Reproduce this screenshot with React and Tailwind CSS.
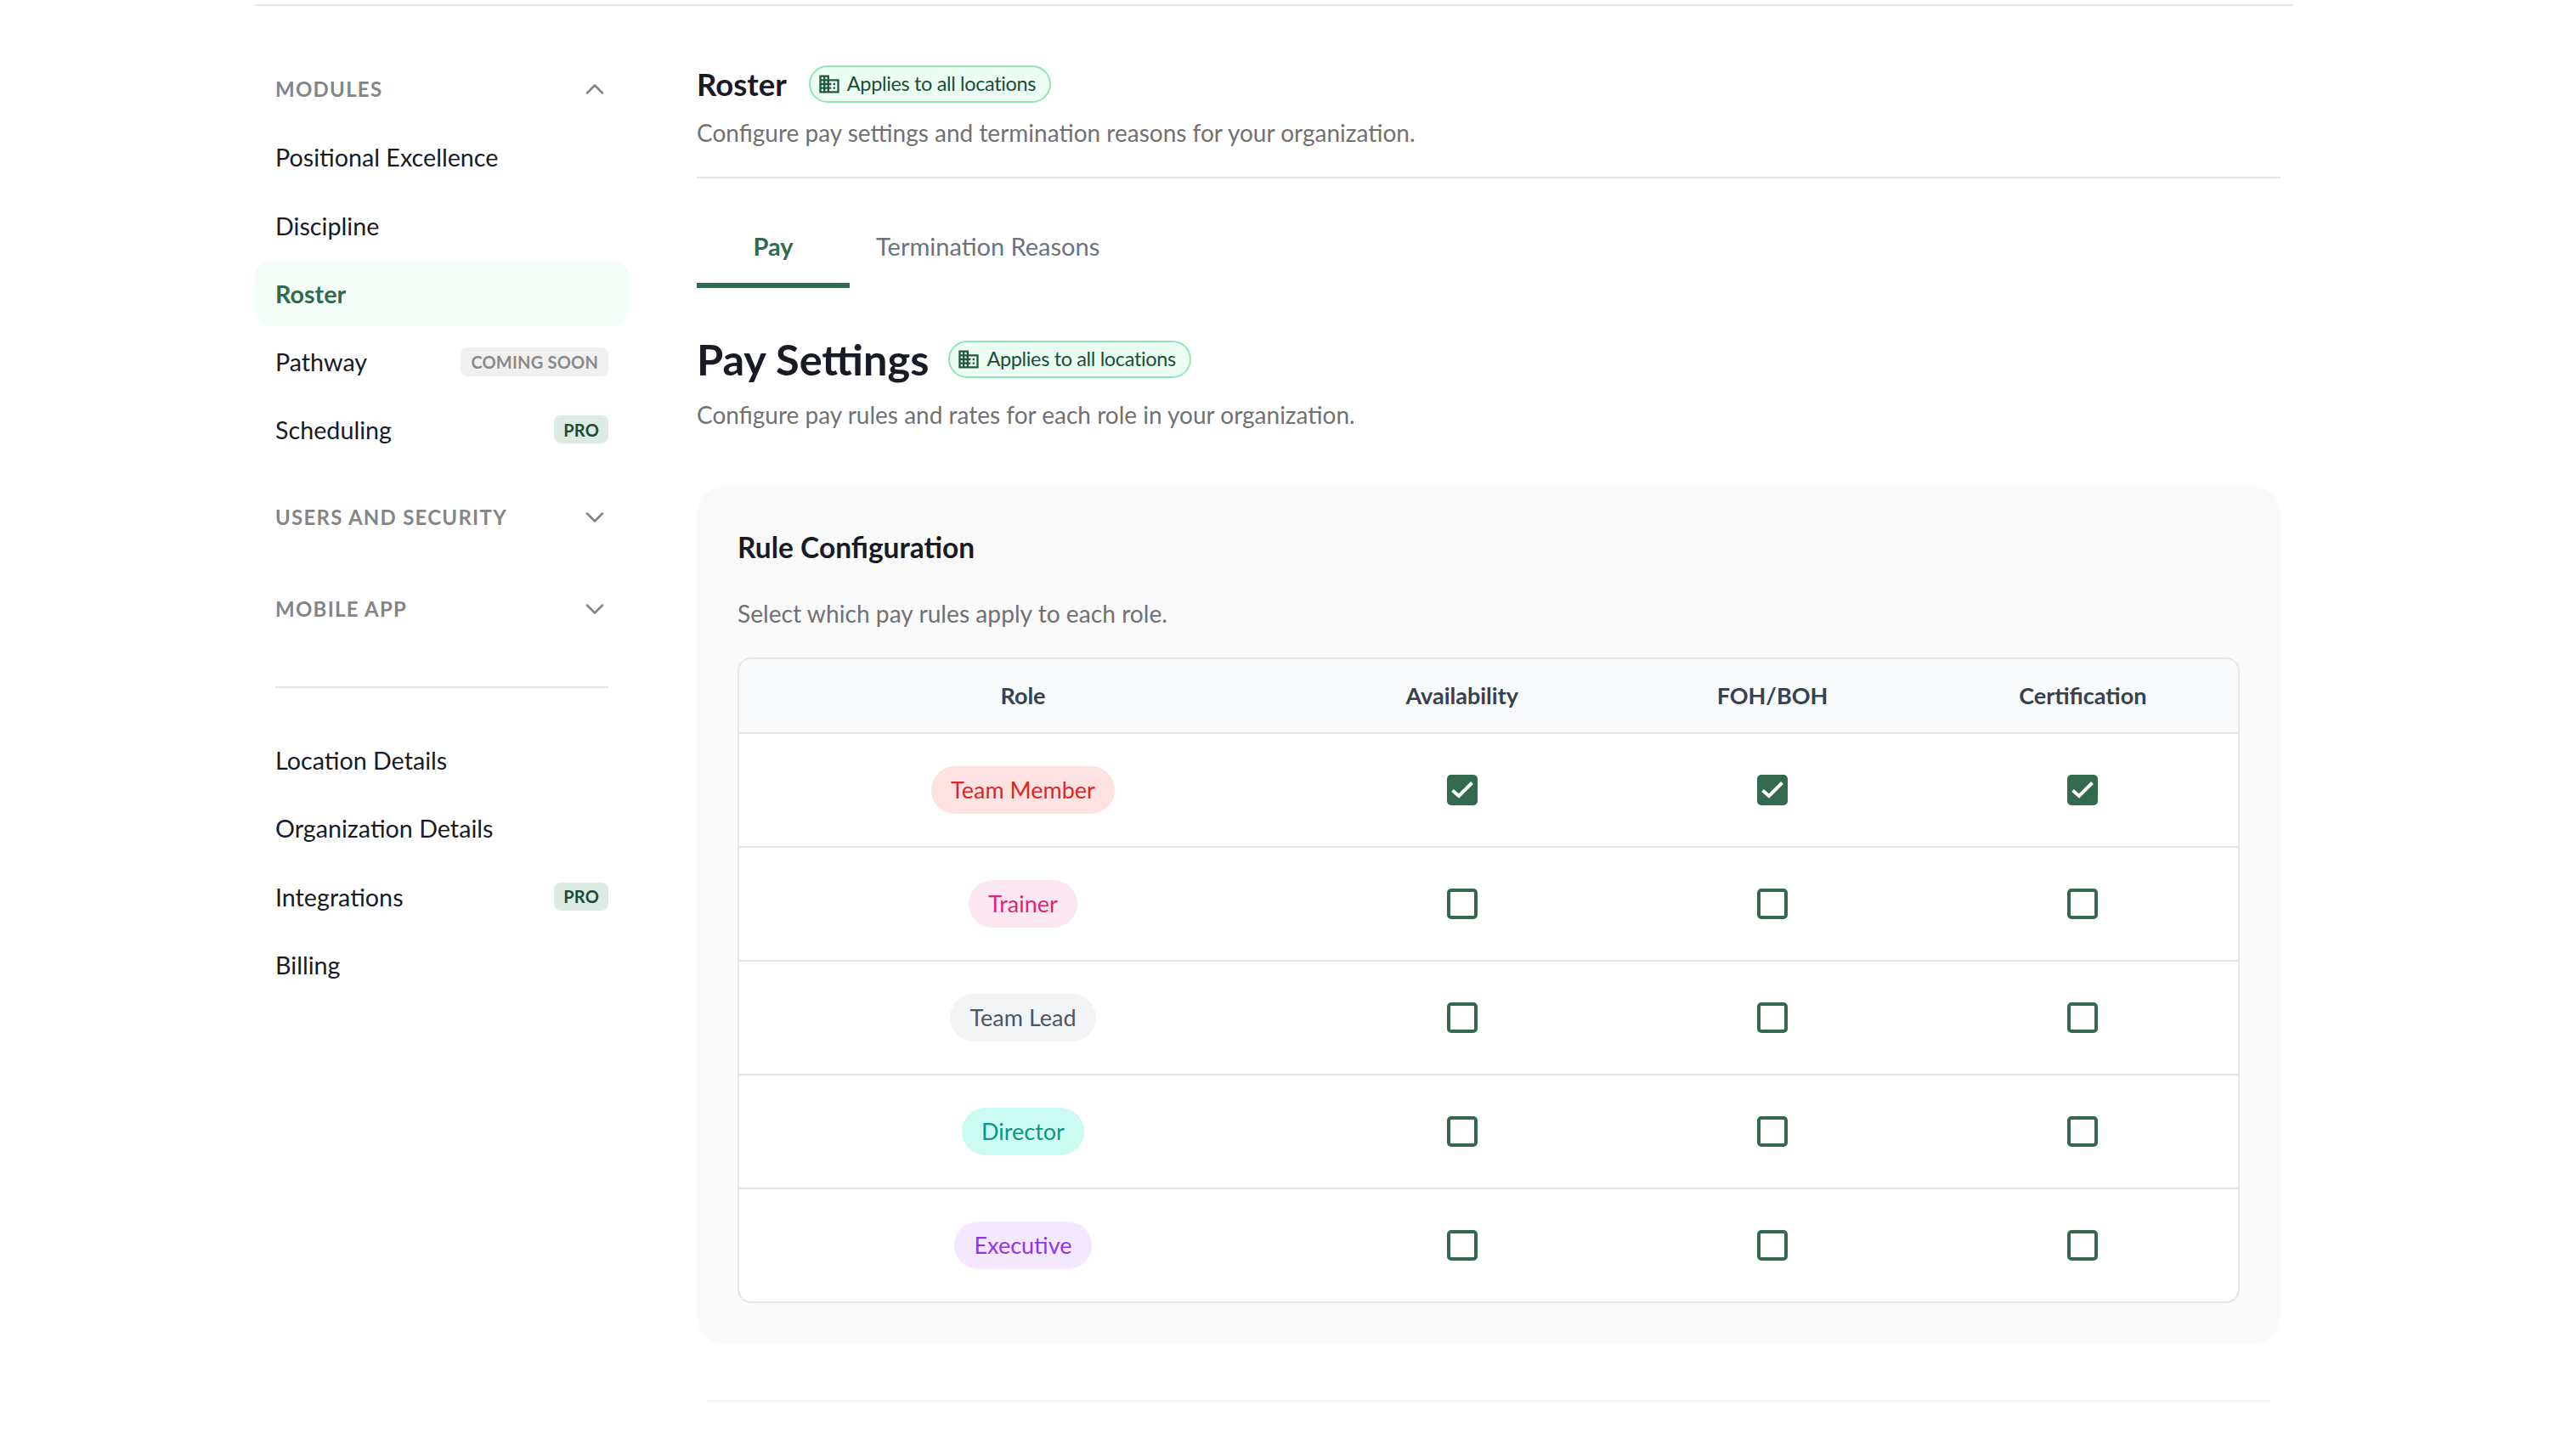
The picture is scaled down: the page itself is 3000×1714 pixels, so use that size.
import React from "react";
import { ChevronUp, ChevronDown } from "lucide-react";
import { MdBusiness } from "react-icons/md";

const Item = ({ label, active, badge }) => (
  <div className={`flex h-[76px] items-center justify-between rounded-[16px] pl-[24px] pr-[24px] text-[28.7px] ${active ? "bg-[#f5fdf9] font-bold text-[#2f6b4f]" : "text-[#181a26]"}`}>
    <span>{label}</span>
    {badge === "soon" && <span className="mb-[2px] flex h-[34px] items-center rounded-[8px] bg-[#f0f0f0] px-[12px] text-[20px] font-bold tracking-[0.2px] text-[#8a8a8a]">COMING SOON</span>}
    {badge === "pro" && <span className="mb-[2px] flex h-[33px] items-center rounded-[8px] bg-[#dcebe4] px-[11px] text-[20px] font-bold tracking-[0.2px] text-[#1f4a36]">PRO</span>}
  </div>
);

const SectionHead = ({ label, open, className = "" }) => (
  <div className={`flex h-[40px] items-center justify-between pl-[24px] pr-[22px] ${className}`}>
    <span className="text-[24px] font-bold tracking-[1.25px] text-[#858585]">{label}</span>
    {open ? <ChevronUp size={36} strokeWidth={1.7} className="text-[#858585]" /> : <ChevronDown size={36} strokeWidth={1.7} className="text-[#858585]" />}
  </div>
);

const ScopePill = () => (
  <span className="flex h-[44px] items-center gap-[7px] rounded-full border-2 border-[#8fe6b4] bg-[#ecfdf3] pl-[8px] pr-[16px] text-[23.5px] tracking-[-0.35px] text-[#1b4d36]">
    <MdBusiness size={28} className="text-[#1f5a3e]" />
    Applies to all locations
  </span>
);

const Check = ({ on }) =>
  on ? (
    <span className="flex h-[36px] w-[36px] items-center justify-center rounded-[5px] bg-[#33694f]">
      <svg width="36" height="36" viewBox="0 0 36 36" fill="none" stroke="#ffffff" strokeWidth="4">
        <path d="M6.5 18.5 14 25 29.5 9.5" />
      </svg>
    </span>
  ) : (
    <span className="block h-[36px] w-[36px] rounded-[5px] border-[4px] border-[#33694f] bg-white" />
  );

const roles = [
  { name: "Team Member", pill: "bg-[#fee2e2] text-[#dc2626]", on: true },
  { name: "Trainer", pill: "bg-[#fce7f3] text-[#db2777]" },
  { name: "Team Lead", pill: "bg-[#f3f4f6] text-[#4b5563]" },
  { name: "Director", pill: "bg-[#ccfbf1] text-[#0d9488]" },
  { name: "Executive", pill: "bg-[#f3e8ff] text-[#9333ea]" },
];

export default function App() {
  return (
    <div className="min-h-[1714px] w-[3000px] overflow-hidden bg-white pt-[5px] font-['Lato',sans-serif]">
      <div className="ml-[300px] w-[2399px] border-t-2 border-[#e5e5e5]">
        <div className="flex">
          <aside className="w-[440px] shrink-0 pt-[78px]">
            <SectionHead label="MODULES" open />
            <nav className="mt-[23px] flex flex-col gap-[4.2px]">
              <Item label="Positional Excellence" />
              <Item label="Discipline" />
              <Item label="Roster" active />
              <Item label="Pathway" badge="soon" />
              <Item label="Scheduling" badge="pro" />
            </nav>
            <SectionHead label="USERS AND SECURITY" className="mt-[44px]" />
            <SectionHead label="MOBILE APP" className="mt-[68px]" />
            <div className="ml-[24px] mr-[24px] mt-[71px] border-t-2 border-[#e5e5e5]" />
            <nav className="mt-[48px] flex flex-col gap-[4.2px]">
              <Item label="Location Details" />
              <Item label="Organization Details" />
              <Item label="Integrations" badge="pro" />
              <Item label="Billing" />
            </nav>
          </aside>

          <main className="ml-[80px] w-[1864px] pt-[70px]">
            <div className="flex h-[44px] items-center gap-[26px]">
              <h1 className="text-[36.5px] font-bold text-[#181a26]">Roster</h1>
              <ScopePill />
            </div>
            <p className="mt-[13px] text-[28px] leading-[44px] text-[#717171]">Configure pay settings and termination reasons for your organization.</p>
            <div className="mt-[30px] border-t-2 border-[#e5e5e5]" />

            <div className="mt-[29px] flex items-start">
              <div className="flex h-[100px] w-[180px] items-start justify-center border-b-[6px] border-[#2f6b4f] pt-[29px] text-[29px] font-bold leading-[44px] text-[#2f6b4f]">Pay</div>
              <div className="ml-[31px] pt-[29px] text-[29px] leading-[44px] text-[#6b7280]">Termination Reasons</div>
            </div>

            <div className="mt-[62px] flex h-[44px] items-center gap-[23px]">
              <h2 className="text-[50.5px] font-bold leading-[64px] text-[#181a26]">Pay Settings</h2>
              <ScopePill />
            </div>
            <p className="mt-[21px] text-[28px] leading-[44px] text-[#717171]">Configure pay rules and rates for each role in your organization.</p>

            <section className="mt-[62px] rounded-[32px] bg-[#fafafa] px-[48px] pb-[48px] pt-[48px]">
              <h3 className="text-[33.5px] font-bold leading-[48px] text-[#181a26]">Rule Configuration</h3>
              <p className="mt-[32px] text-[28.2px] leading-[44px] text-[#717171]">Select which pay rules apply to each role.</p>
              <div className="mt-[30px] overflow-hidden rounded-[16px] border-2 border-[#e5e5e5] bg-white">
                <div className="grid h-[86px] grid-cols-[668px_1fr_1fr_1fr] items-center bg-[#f9fafb] text-center text-[27px] font-bold text-[#374151]">
                  <div>Role</div>
                  <div>Availability</div>
                  <div>FOH/BOH</div>
                  <div>Certification</div>
                </div>
                {roles.map((r) => (
                  <div key={r.name} className="grid h-[134px] grid-cols-[668px_1fr_1fr_1fr] items-center border-t-2 border-[#e5e5e5]">
                    <div className="flex justify-center">
                      <span className={`flex h-[56px] items-center rounded-full px-[23px] text-[27px] ${r.pill}`}>{r.name}</span>
                    </div>
                    <div className="flex justify-center"><Check on={r.on} /></div>
                    <div className="flex justify-center"><Check on={r.on} /></div>
                    <div className="flex justify-center"><Check on={r.on} /></div>
                  </div>
                ))}
              </div>
            </section>
            <div className="mx-[11px] mt-[66px] h-[3px] bg-[#f8f8f8]" />
          </main>
        </div>
      </div>
    </div>
  );
}
